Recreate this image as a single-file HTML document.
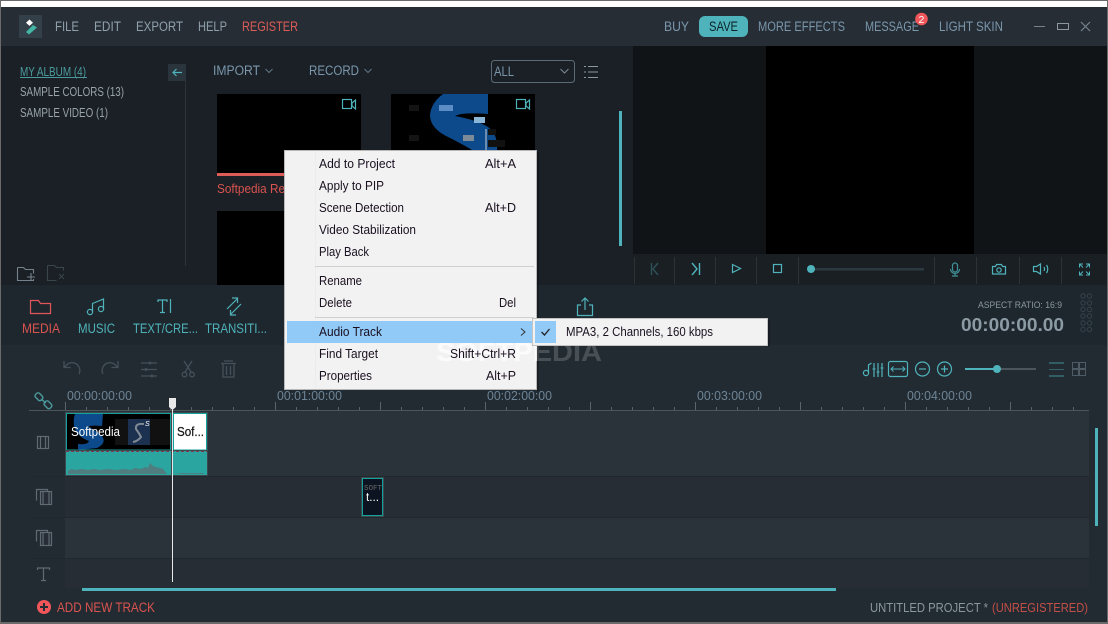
<!DOCTYPE html>
<html><head><meta charset="utf-8"><style>
html,body{margin:0;padding:0;background:#262d35;overflow:hidden}
svg{display:block;font-family:"Liberation Sans",sans-serif}
text{white-space:pre}
.m{font-size:12.5px;fill:#1a1020}
.h{font-size:13.5px;fill:#8fa0aa}
.b{font-size:13.5px;fill:#7a97ac}
.s{font-size:12.5px;fill:#98a4aa}
.t{font-size:13.5px;fill:#4fb3bb}
.r{font-size:12.5px;fill:#6d8496}
.ic{fill:none;stroke:#4fb3bb;stroke-width:1.2}
.gi{fill:none;stroke:#445059;stroke-width:1.3}
.tk{fill:none;stroke:#5f6a72;stroke-width:1.2}
</style></head><body>
<svg xmlns="http://www.w3.org/2000/svg" width="1108" height="624" viewBox="0 0 1108 624">
<defs>
<clipPath id="wm"><rect x="400" y="330" width="137" height="40"/></clipPath>
<clipPath id="wo"><rect x="537" y="330" width="100" height="40"/></clipPath>
</defs>
<rect width="1108" height="624" fill="#232b32"/>
<!-- title -->
<rect width="1108" height="7" fill="#fff"/>
<rect width="1108" height="1" fill="#6a6a6a"/>
<rect y="7" width="1108" height="39" fill="#262d35"/>
<rect x="19" y="15" width="23" height="23" fill="#333f49"/>
<path d="M29.500 19.500l3.500 3.200-3.500 3.200-3.500-3.200z" fill="#fff"/>
<path d="M33 25l4 2.500-8 7-3-2.500z" fill="#43b5a4"/>
<text class="h" x="55" y="31" textLength="24" lengthAdjust="spacingAndGlyphs">FILE</text>
<text class="h" x="94" y="31" textLength="27" lengthAdjust="spacingAndGlyphs">EDIT</text>
<text class="h" x="136" y="31" textLength="47" lengthAdjust="spacingAndGlyphs">EXPORT</text>
<text class="h" x="198" y="31" textLength="29" lengthAdjust="spacingAndGlyphs">HELP</text>
<text class="h" x="242" y="31" textLength="56" lengthAdjust="spacingAndGlyphs" style="fill:#dc5c58">REGISTER</text>
<text class="b" x="664" y="31" textLength="25" lengthAdjust="spacingAndGlyphs">BUY</text>
<rect x="699" y="16" width="49" height="21" rx="6" fill="#4fb3bb"/>
<text class="h" x="709" y="31" textLength="29" lengthAdjust="spacingAndGlyphs" style="fill:#0d2229">SAVE</text>
<text class="b" x="758" y="31" textLength="87" lengthAdjust="spacingAndGlyphs">MORE EFFECTS</text>
<text class="b" x="865" y="31" textLength="54" lengthAdjust="spacingAndGlyphs">MESSAGE</text>
<circle cx="921.500" cy="19" r="6.300" fill="#f0565a"/>
<text x="918.500" y="23" font-size="10.500" fill="#fff">2</text>
<text class="b" x="939" y="31" textLength="64" lengthAdjust="spacingAndGlyphs">LIGHT SKIN</text>
<path d="M1034 26.500h11" stroke="#76838c" fill="none"/>
<rect x="1057.500" y="23.500" width="11" height="6" fill="none" stroke="#8b98a0"/>
<path d="M1081 22l9 9m0-9l-9 9" stroke="#76838c" fill="none" stroke-width="1.200"/>
<!-- left panel -->
<rect y="46" width="633" height="239" fill="#1b2026"/>
<rect x="185" y="80" width="1" height="186" fill="#2c343b"/>
<text class="s" x="20" y="76" textLength="66" lengthAdjust="spacingAndGlyphs" style="fill:#4a9a9d">MY ALBUM (4)</text>
<rect x="20" y="77" width="67" height="1" fill="#4a9a9d"/>
<text class="s" x="20" y="96" textLength="104" lengthAdjust="spacingAndGlyphs">SAMPLE COLORS (13)</text>
<text class="s" x="20" y="117" textLength="88" lengthAdjust="spacingAndGlyphs">SAMPLE VIDEO (1)</text>
<rect x="168" y="64" width="18" height="17" fill="#2a343c"/>
<path d="M182 72.500h-9m3.500-3.500l-3.500 3.500 3.500 3.500" class="ic"/>
<text class="b" x="213" y="75" textLength="47" lengthAdjust="spacingAndGlyphs">IMPORT</text>
<path d="M265.500 69l3.500 3.500 3.500-3.500" fill="none" stroke="#5f7685"/>
<text class="b" x="309" y="75" textLength="50" lengthAdjust="spacingAndGlyphs">RECORD</text>
<path d="M364.500 69l3.500 3.500 3.500-3.500" fill="none" stroke="#5f7685"/>
<rect x="491.500" y="60.500" width="83" height="22" rx="3" fill="#1b2026" stroke="#5b6c78"/>
<text class="b" x="494" y="76" textLength="20" lengthAdjust="spacingAndGlyphs">ALL</text>
<path d="M560.500 69l4 4 4-4" fill="none" stroke="#7d8a93"/>
<path d="M588 66.500h10M588 72h10M588 77.500h10M584 66.500h2M584 72h2M584 77.500h2" stroke="#8b98a0" fill="none"/>
<!-- thumbs -->
<rect x="217" y="94" width="144" height="79" fill="#000"/>
<rect x="217" y="173" width="144" height="3" fill="#dc5c58"/>
<text x="217" y="193" font-size="12.500" fill="#d9534f" textLength="68" lengthAdjust="spacingAndGlyphs">Softpedia Re</text>
<rect x="217" y="211" width="144" height="74" fill="#000"/>
<rect x="391" y="94" width="144" height="79" fill="#000"/>
<path d="M443 94h45v20q-26-2-33 2 22 4 33 11 10 7 9 23h-25q-8-5-22-12-20-9-20-23 1-12 13-21z" fill="#0d4a8c"/>
<rect x="439" y="105" width="14" height="6" fill="#5c8dc4"/>
<rect x="474" y="117" width="11" height="6" fill="#8ab6d8"/>
<rect x="409" y="105" width="10" height="6" fill="#141414"/><rect x="409" y="135" width="10" height="6" fill="#141414"/>
<rect x="463" y="135" width="11" height="6" fill="#7d8a98"/>
<rect x="485" y="129" width="2" height="21" fill="#6c8cb0"/>
<rect x="488" y="129" width="8" height="6" fill="#111"/>
<rect x="488" y="140" width="17" height="7" fill="#111"/>
<g class="ic"><rect x="342.500" y="99.500" width="9" height="9"/><path d="M352 103l3.500-3v9l-3.500-3z"/></g>
<g class="ic"><rect x="516.500" y="99.500" width="9" height="9"/><path d="M526 103l3.500-3v9l-3.500-3z"/></g>
<rect x="619" y="111" width="3" height="135" fill="#4fb3bb"/>
<path d="M17.500 267.500h6l2 2h8v4M33.500 279v1.500h-16v-13" fill="none" stroke="#75828b" stroke-width="1.100"/>
<path d="M31 273v8m-4-4h8" stroke="#75828b" fill="none" stroke-width="1.100"/>
<path d="M47.500 265.500h7l2 2h7v3M47.500 265.500v15h9" fill="none" stroke="#3b454d" stroke-width="1.100"/>
<path d="M59 274l5 5m0-5l-5 5" stroke="#3b454d" fill="none"/>
<!-- preview -->
<rect x="633" y="46" width="475" height="208" fill="#111417"/>
<rect x="766" y="46" width="208" height="208" fill="#000"/>
<rect x="633" y="254" width="475" height="31" fill="#1a1f24"/>
<path d="M634.500 257v27M674.500 257v27M715.500 257v27M756.500 257v27M798.500 257v27M934.500 257v27M976.500 257v27M1019.500 257v27M1061.500 257v27" stroke="#2b3339" fill="none"/>
<path d="M651.500 263v12M658 263l-5 6 5 6" fill="none" stroke="#2e5258" stroke-width="1.400"/>
<path d="M699.500 263v12M692 263l5 6-5 6" fill="none" stroke="#4fb3bb" stroke-width="1.400"/>
<path d="M732.500 264.500l8 4-8 4z" class="ic"/>
<rect x="773.500" y="264.500" width="8" height="8" class="ic"/>
<rect x="811" y="268" width="113" height="2.600" fill="#2a3a40"/>
<circle cx="811" cy="269" r="4" fill="#4fb3bb"/>
<rect x="952.500" y="263" width="5" height="9" rx="2.500" fill="none" stroke="#3f8f96" stroke-width="1.200"/>
<path d="M950.500 269a4.500 4.500 0 0 0 9 0M955 274v2m-3 0h6" fill="none" stroke="#3f8f96" stroke-width="1.200"/>
<path d="M992.500 266.500h3l1-2h5l1 2h3v7.500h-13z" class="ic"/><circle cx="999" cy="270" r="2.200" class="ic"/>
<path d="M1033.500 266.500h3l4-2.500v10l-4-2.500h-3zM1044 267a4 4 0 0 1 0 4M1046.500 265a7 7 0 0 1 0 8" class="ic"/>
<path d="M1079.500 267.500v-3.500h3.500M1079.500 264l3.500 3.500M1089.500 267.500v-3.500h-3.500M1089.500 264l-3.500 3.500M1079.500 271.500v3.500h3.500M1079.500 275l3.500-3.500M1089.500 271.500v3.500h-3.500M1089.500 275l-3.500-3.500" class="ic" style="stroke-width:1"/>
<!-- tool strip -->
<rect y="285" width="1108" height="60" fill="#1f272e"/>
<path d="M30.500 313.500v-13h8l2 3h10v10z" fill="none" stroke="#e0565a" stroke-width="1.200"/>
<text class="t" x="22" y="333" textLength="38" lengthAdjust="spacingAndGlyphs" style="fill:#d9534f">MEDIA</text>
<path d="M92.500 312v-8.500l11-4.500v10" class="ic"/><circle cx="90" cy="312" r="2.600" class="ic"/><circle cx="101" cy="309" r="2.600" class="ic"/>
<text class="t" x="78" y="333" textLength="37" lengthAdjust="spacingAndGlyphs">MUSIC</text>
<path d="M158 302v-2h9v2M162.500 300v12.500M160 312.500h5M170.500 299v14" class="ic"/>
<text class="t" x="133" y="333" textLength="65" lengthAdjust="spacingAndGlyphs">TEXT/CRE...</text>
<path d="M228 310l10-10M233 299h5.500v5M242 305l-10 10M237 316h-5.500v-5" class="ic" transform="translate(-1 -1)"/>
<text class="t" x="205" y="333" textLength="62" lengthAdjust="spacingAndGlyphs">TRANSITI...</text>
<path d="M581 305h-3.500v10.500h15V305H589M585 310v-12m-3.500 3.500l3.500-3.500 3.500 3.500" class="ic"/>
<text x="978" y="308" font-size="9.500" fill="#8a979f" textLength="84" lengthAdjust="spacingAndGlyphs">ASPECT RATIO: 16:9</text>
<text x="961" y="331" font-size="18" font-weight="bold" fill="#8b9aa3" textLength="103" lengthAdjust="spacingAndGlyphs">00:00:00.00</text>
<g fill="none" stroke="#36424b"><circle cx="1083" cy="296" r="2.200"/><circle cx="1089.500" cy="296" r="2.200"/><circle cx="1083" cy="303" r="2.200"/><circle cx="1089.500" cy="303" r="2.200"/><circle cx="1083" cy="309.500" r="2.200"/><circle cx="1089.500" cy="309.500" r="2.200"/><circle cx="1083" cy="316" r="2.200"/><circle cx="1089.500" cy="316" r="2.200"/><circle cx="1083" cy="323" r="2.200"/><circle cx="1089.500" cy="323" r="2.200"/><circle cx="1083" cy="329.500" r="2.200"/><circle cx="1089.500" cy="329.500" r="2.200"/></g>
<!-- timeline toolbar -->
<path d="M65 367a7.500 7.500 0 1 1 14 7M64 361v6.500h6.500" class="gi"/>
<path d="M117 367a7.500 7.500 0 1 0-14 7M118 361v6.500h-6.500" class="gi"/>
<path d="M141 363h16M141 369.500h16M141 376h16" class="gi"/><circle cx="150" cy="363" r="1.500" fill="#445059"/><circle cx="146" cy="369.500" r="1.500" fill="#445059"/><circle cx="152" cy="376" r="1.500" fill="#445059"/>
<path d="M184 361l7 11M192 361l-7 11" class="gi"/><circle cx="184.500" cy="374.500" r="2.300" class="gi"/><circle cx="192" cy="374.500" r="2.300" class="gi"/>
<path d="M221 363.500h15M224 361h9M223 364v13h11v-13M226.500 366v9M230.500 366v9" class="gi"/>
<circle cx="866" cy="373" r="2.600" class="ic"/><path d="M868.500 373v-8l3-2M874 363v14M878 363v14M882 363v14" class="ic"/><path d="M872.500 369h3M876.500 372h3M880.500 368h3" stroke="#4fb3bb" fill="none"/>
<rect x="888.500" y="361.500" width="19" height="15" rx="2" class="ic"/><path d="M891 369h14M893.500 366.500l-2.500 2.500 2.500 2.500M902.500 366.500l2.500 2.500-2.500 2.500" class="ic" style="stroke-width:1"/>
<circle cx="922.500" cy="369" r="7" class="ic"/><path d="M919 369h7" class="ic"/>
<circle cx="944.500" cy="369" r="7" class="ic"/><path d="M941 369h7m-3.500-3.500v7" class="ic"/>
<rect x="965" y="368" width="32" height="2" fill="#4fb3bb"/><rect x="997" y="368" width="39" height="2" fill="#4a555d"/>
<circle cx="997" cy="369" r="4" fill="#4fb3bb"/>
<path d="M1049 363h15M1049 376h15" stroke="#3f8f96" fill="none"/><path d="M1049 369.500h15" stroke="#33626a" fill="none"/>
<g fill="none" stroke="#4f5b64"><rect x="1072.500" y="362.500" width="6" height="6"/><rect x="1079.500" y="362.500" width="6" height="6"/><rect x="1072.500" y="369.500" width="6" height="6"/><rect x="1079.500" y="369.500" width="6" height="6"/></g>
<!-- ruler -->
<g class="r"><text x="67" y="400" textLength="65" lengthAdjust="spacingAndGlyphs">00:00:00:00</text><text x="277" y="400" textLength="65" lengthAdjust="spacingAndGlyphs">00:01:00:00</text><text x="487" y="400" textLength="65" lengthAdjust="spacingAndGlyphs">00:02:00:00</text><text x="697" y="400" textLength="65" lengthAdjust="spacingAndGlyphs">00:03:00:00</text><text x="907" y="400" textLength="65" lengthAdjust="spacingAndGlyphs">00:04:00:00</text></g>
<g fill="none" stroke="#4a9a9d" stroke-width="1.400"><rect x="35" y="394" width="8" height="5.500" rx="2" transform="rotate(45 39 396.700)"/><rect x="44" y="402" width="8" height="5.500" rx="2" transform="rotate(45 48 404.700)"/><path d="M41 399l5 4"/></g>
<rect x="29" y="410" width="1060" height="1" fill="#4a555c"/>
<path d="M65.500 402v8M170.500 402v8M275.500 402v8M380.500 402v8M485.500 402v8M590.500 402v8M695.500 402v8M800.500 402v8M905.500 402v8M1010.500 402v8" stroke="#59646b" fill="none"/>
<path d="M86.500 407v3M107.500 407v3M128.500 407v3M149.500 407v3M191.500 407v3M212.500 407v3M233.500 407v3M254.500 407v3M296.500 407v3M317.500 407v3M338.500 407v3M359.500 407v3M401.500 407v3M422.500 407v3M443.500 407v3M464.500 407v3M506.500 407v3M527.500 407v3M548.500 407v3M569.500 407v3M611.500 407v3M632.500 407v3M653.500 407v3M674.500 407v3M716.500 407v3M737.500 407v3M758.500 407v3M779.500 407v3M821.500 407v3M842.500 407v3M863.500 407v3M884.500 407v3M926.500 407v3M947.500 407v3M968.500 407v3M989.500 407v3M1031.500 407v3M1052.500 407v3M1073.500 407v3" stroke="#59646b" fill="none"/>
<!-- tracks -->
<rect x="65" y="411" width="1024" height="65" fill="#2b333a"/>
<rect x="65" y="476" width="1024" height="41" fill="#262d34"/>
<rect x="65" y="517" width="1024" height="41" fill="#2b333a"/>
<rect x="65" y="558" width="1024" height="30" fill="#262d34"/>
<rect x="29" y="476" width="1060" height="1" fill="#20272d"/>
<rect x="29" y="517" width="1060" height="1" fill="#20272d"/>
<rect x="29" y="558" width="1060" height="1" fill="#20272d"/>
<g class="tk"><rect x="37.500" y="436.500" width="11" height="12"/><path d="M40.500 436.500v12M45.500 436.500v12"/></g>
<g class="tk"><path d="M36.500 500.500v-11h11v2"/><rect x="40.500" y="491.500" width="11" height="13" fill="#262d35"/><path d="M43 491.500v13M49 491.500v13"/></g>
<g class="tk"><path d="M36.500 541.500v-11h11v2"/><rect x="40.500" y="532.500" width="11" height="13" fill="#262d35"/><path d="M43 532.500v13M49 532.500v13"/></g>
<path d="M37.500 570v-2h12v2M43.500 568v12M41 580.500h5" class="tk"/>
<!-- clips -->
<rect x="65" y="412" width="143" height="64" fill="#3c4a50"/>
<rect x="66" y="413" width="105" height="37" fill="#16a09a"/>
<rect x="67" y="414" width="103" height="35.500" fill="#000"/>
<path d="M75 414h28l-1 12q-12-1-14 1 8 3 14 9 5 7-5 12l-19 2v-6q10 1 11-3-12-4-15-15-1-7 1-12z" fill="#0d4a8c"/>
<rect x="115" y="419" width="55" height="26" fill="#111"/>
<rect x="128" y="419" width="22" height="26" fill="#1c3050"/>
<path d="M144 424q-9-1-8 5 3 4 5 8-3 4-8 5" fill="none" stroke="#7f8a94" stroke-width="2"/>
<text x="145" y="426" font-size="7" font-style="italic" fill="#fff">S</text>
<text x="71" y="436" font-size="13" fill="#fff" textLength="49" lengthAdjust="spacingAndGlyphs">Softpedia</text>
<rect x="173" y="413" width="34" height="37" fill="#16a09a"/>
<rect x="174" y="414" width="32" height="35.500" fill="#fff"/>
<text x="177" y="436" font-size="13" fill="#111" stroke="#333" stroke-width=".3" textLength="27" lengthAdjust="spacingAndGlyphs">Sof...</text>
<rect x="66" y="451" width="105" height="24" fill="#2aa5a0"/>
<rect x="173" y="451" width="34" height="24" fill="#2aa5a0"/>
<path d="M66 451.500h141" stroke="#7a3a50" stroke-dasharray="3 2" fill="none"/>
<path d="M68 474v-3l3-2 5 1 6-1 6 1 6-1 6 1 8-1 8 1 8-1 7 1 4-2 6 1 4-2 3 1 2-5 3 3 3 1 4 1 3 1 4 5z" fill="#4f7d80"/>
<path d="M175 474l6-1h22l1 1z" fill="#4f7d80"/>
<rect x="361" y="477" width="23" height="40" fill="#3c4a50"/>
<rect x="362" y="478" width="21" height="38" fill="#16a09a"/>
<rect x="363" y="479" width="19" height="36" fill="#0b1420"/>
<text x="364" y="490" font-size="7.500" font-family="Liberation Mono" fill="#6a6a6a" textLength="18" lengthAdjust="spacingAndGlyphs">SOFT</text>
<text x="366" y="501" font-size="12" fill="#fff" textLength="13" lengthAdjust="spacingAndGlyphs">t...</text>
<!-- playhead -->
<rect x="172" y="405" width="1" height="177" fill="#e8e8e8"/>
<path d="M169 398h7v9l-3.500 3-3.500-3z" fill="#e8e8e8"/>
<!-- scrollbars -->
<rect x="1095" y="428" width="3" height="98" fill="#4fb3bb"/>
<rect x="82" y="588" width="754" height="3" fill="#4fb3bb"/>
<!-- footer -->
<circle cx="44" cy="607" r="7" fill="#f0565a"/>
<path d="M40 607h8m-4-4v8" stroke="#262d35" stroke-width="2" fill="none"/>
<text x="57" y="612" font-size="13.500" fill="#d9534f" textLength="98" lengthAdjust="spacingAndGlyphs">ADD NEW TRACK</text>
<text x="870" y="612" font-size="13" fill="#8a979f" textLength="118" lengthAdjust="spacingAndGlyphs">UNTITLED PROJECT *</text>
<text x="992" y="612" font-size="13" fill="#c24f48" textLength="96" lengthAdjust="spacingAndGlyphs">(UNREGISTERED)</text>
<!-- menu -->
<rect x="284.500" y="150.500" width="252" height="239" fill="#f2f2f2" stroke="#b8b8b8"/>
<rect x="537" y="152" width="2" height="239" fill="#000" opacity=".25"/>
<rect x="315" y="152" width="1" height="236" fill="#ececec"/>
<rect x="315" y="266" width="219" height="1" fill="#d0d0d0"/>
<rect x="315" y="317" width="219" height="1" fill="#d0d0d0"/>
<rect x="287" y="321" width="246" height="22" fill="#91c9f7"/>
<text class="m" x="319" y="168" textLength="76" lengthAdjust="spacingAndGlyphs">Add to Project</text>
<text class="m" x="485" y="168" textLength="31" lengthAdjust="spacingAndGlyphs">Alt+A</text>
<text class="m" x="319" y="190" textLength="65" lengthAdjust="spacingAndGlyphs">Apply to PIP</text>
<text class="m" x="319" y="212" textLength="85" lengthAdjust="spacingAndGlyphs">Scene Detection</text>
<text class="m" x="485" y="212" textLength="31" lengthAdjust="spacingAndGlyphs">Alt+D</text>
<text class="m" x="319" y="234" textLength="97" lengthAdjust="spacingAndGlyphs">Video Stabilization</text>
<text class="m" x="319" y="256" textLength="50" lengthAdjust="spacingAndGlyphs">Play Back</text>
<text class="m" x="319" y="285" textLength="43" lengthAdjust="spacingAndGlyphs">Rename</text>
<text class="m" x="319" y="307" textLength="33" lengthAdjust="spacingAndGlyphs">Delete</text>
<text class="m" x="499" y="307" textLength="17" lengthAdjust="spacingAndGlyphs">Del</text>
<text class="m" x="319" y="336" textLength="63" lengthAdjust="spacingAndGlyphs">Audio Track</text>
<path d="M521 328.500l4 3.500-4 3.500" fill="none" stroke="#333" stroke-width="1"/>
<text class="m" x="319" y="358" textLength="59" lengthAdjust="spacingAndGlyphs">Find Target</text>
<text class="m" x="319" y="380" textLength="53" lengthAdjust="spacingAndGlyphs">Properties</text>
<text class="m" x="486" y="380" textLength="30" lengthAdjust="spacingAndGlyphs">Alt+P</text>
<!-- watermark (under menu shortcut text) -->
<text x="436" y="361" font-size="27" font-weight="bold" fill="#fff" opacity=".75" clip-path="url(#wm)" textLength="166" lengthAdjust="spacingAndGlyphs">SOFTPEDIA</text>
<rect x="287" y="321" width="246" height="22" fill="#91c9f7"/>
<text class="m" x="319" y="336" textLength="63" lengthAdjust="spacingAndGlyphs">Audio Track</text>
<path d="M521 328.500l4 3.500-4 3.500" fill="none" stroke="#333" stroke-width="1"/>
<text class="m" x="450" y="358" textLength="66" lengthAdjust="spacingAndGlyphs">Shift+Ctrl+R</text>
<text x="436" y="361" font-size="27" font-weight="bold" fill="#fff" opacity=".17" clip-path="url(#wo)" textLength="166" lengthAdjust="spacingAndGlyphs">SOFTPEDIA</text>
<!-- submenu -->
<rect x="532.500" y="318.500" width="235" height="27" fill="#f2f2f2" stroke="#c4c4c4"/>
<rect x="768" y="320" width="2" height="27" fill="#000" opacity=".25"/>
<rect x="535" y="321" width="21" height="22" fill="#91c9f7"/>
<path d="M541.500 332l3 3 5-6" fill="none" stroke="#222" stroke-width="1.300"/>
<text class="m" x="566" y="336" textLength="147" lengthAdjust="spacingAndGlyphs">MPA3, 2 Channels, 160 kbps</text>
<!-- frame -->
<rect x="0" y="0" width="1" height="624" fill="#6a6a6a"/>
<rect x="1107" y="0" width="1" height="624" fill="#6a6a6a"/>
<rect x="0" y="622" width="1108" height="2" fill="#6a6a6a"/>
</svg>
</body></html>
